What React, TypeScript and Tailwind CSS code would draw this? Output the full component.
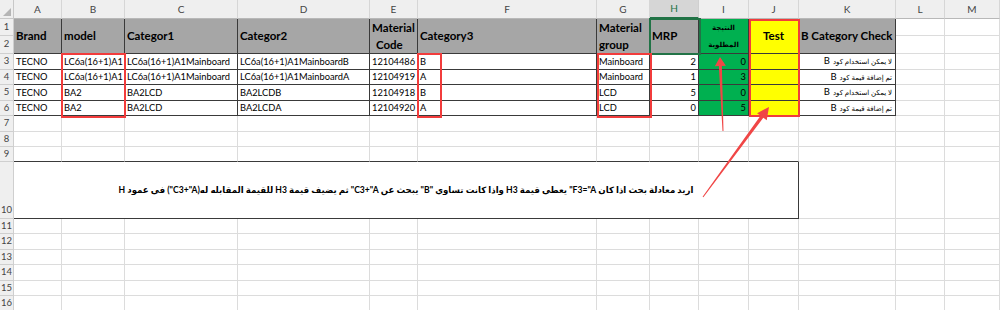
import clsx from "clsx";

const gridCell = "border-r border-b border-[#dcdcdc]";
const tableCell = "border-r border-b border-[#3a3a3a]";
const rowHead =
  "flex items-center justify-center border-r border-b border-[#cfcfcf] bg-[#efefef] text-[9.5px] text-[#444]";
const head =
  "row-span-2 flex items-center overflow-hidden whitespace-nowrap bg-[#a6a6a6] px-[2px] text-[11.5px] font-bold text-black";
const data = "flex items-center overflow-hidden whitespace-nowrap px-[2px] text-[9.3px] text-black";
const arabicCell = "flex items-center justify-start overflow-hidden whitespace-nowrap pr-[3px] text-[7px] text-black";

const rows = [
  { n: 3, a: "TECNO", b: "LC6a(16+1)A1", c: "LC6a(16+1)A1Mainboard", d: "LC6a(16+1)A1MainboardB", e: "12104486", f: "B", g: "Mainboard", h: "2", i: "0", k: "لا يمكن استخدام كود" },
  { n: 4, a: "TECNO", b: "LC6a(16+1)A1", c: "LC6a(16+1)A1Mainboard", d: "LC6a(16+1)A1MainboardA", e: "12104919", f: "A", g: "Mainboard", h: "1", i: "3", k: "تم إضافة قيمة كود" },
  { n: 5, a: "TECNO", b: "BA2", c: "BA2LCD", d: "BA2LCDB", e: "12104918", f: "B", g: "LCD", h: "5", i: "0", k: "لا يمكن استخدام كود" },
  { n: 6, a: "TECNO", b: "BA2", c: "BA2LCD", d: "BA2LCDA", e: "12104920", f: "A", g: "LCD", h: "0", i: "5", k: "تم إضافة قيمة كود" },
];

const letters = ["A", "B", "C", "D", "E", "F", "G", "H", "I", "J", "K", "L", "M"];

function arrow(x1: number, y1: number, x2: number, y2: number, hl: number, hw: number, tw: number, nw: number) {
  const dx = x2 - x1;
  const dy = y2 - y1;
  const len = Math.hypot(dx, dy);
  const ux = dx / len;
  const uy = dy / len;
  const px = -uy;
  const py = ux;
  const bx = x2 - ux * hl;
  const by = y2 - uy * hl;
  const p = (x: number, y: number, s: number) => `${x + px * s},${y + py * s}`;
  return [
    p(x1, y1, tw / 2),
    p(bx, by, nw / 2),
    p(bx, by, hw / 2),
    `${x2},${y2}`,
    p(bx, by, -hw / 2),
    p(bx, by, -nw / 2),
    p(x1, y1, -tw / 2),
  ].join(" ");
}

function EmptyRow({ n, darkBottom }: { n: number; darkBottom?: boolean }) {
  return (
    <>
      <div className={rowHead}>{n}</div>
      {letters.map((l, idx) => (
        <div
          key={l}
          className={clsx(
            "border-r border-b",
            darkBottom && idx < 10 ? "border-r-[#dcdcdc] border-b-[#3a3a3a]" : "border-[#dcdcdc]"
          )}
        />
      ))}
    </>
  );
}

export default function App() {
  return (
    <div className="relative h-[310px] w-[1000px] overflow-hidden bg-white font-['Lato','DejaVu_Sans',sans-serif]">
      <div className="grid grid-cols-[14px_48px_63px_113px_132px_48px_179px_53px_49px_50px_50px_97px_49px_55px] grid-rows-[19px_17px_18px_16px_15px_16px_15px_16px_15px_15px_57px_15px_16px_15px_16px_15px_16px]">
        {/* column headings */}
        <div className="relative border-r border-b border-[#c8c8c8] bg-[#efefef]">
          <div className="absolute right-[2px] bottom-[2px] h-0 w-0 border-l-[8px] border-t-[8px] border-l-transparent border-t-transparent border-r-0 border-b-[8px] border-b-[#b5b5b5]" />
        </div>
        {letters.map((l) => (
          <div
            key={l}
            className={clsx(
              "flex items-center justify-center border-r text-[10px]",
              l === "H"
                ? "border-b-2 border-r-[#cfcfcf] border-b-[#217346] bg-[#d6d6d6] text-[#217346]"
                : "border-b border-r-[#d6d6d6] border-b-[#b8b8b8] bg-[#efefef] text-[#444]"
            )}
          >
            {l}
          </div>
        ))}

        {/* rows 1-2 : table header */}
        <div className={clsx(rowHead, "bg-[#e1e1e1]")}>1</div>
        <div className={clsx(head, tableCell)}>Brand</div>
        <div className={clsx(head, tableCell)}>model</div>
        <div className={clsx(head, tableCell)}>Categor1</div>
        <div className={clsx(head, tableCell)}>Categor2</div>
        <div className={clsx(head, tableCell, "flex-col items-start justify-center leading-[17px]")}>
          <span>Material</span>
          <span className="pl-[4px]">Code</span>
        </div>
        <div className={clsx(head, tableCell)}>Category3</div>
        <div className={clsx(head, tableCell, "flex-col items-start justify-center leading-[17px]")}>
          <span>Material</span>
          <span>group</span>
        </div>
        <div className={clsx(head, tableCell)}>MRP</div>
        <div
          className={clsx(
            "row-span-2 flex flex-col items-center justify-center bg-[#00b050] text-[7px] leading-[17px] font-bold text-black",
            tableCell
          )}
        >
          <span>النتيجة</span>
          <span>المطلوبة</span>
        </div>
        <div className={clsx(head, tableCell, "justify-center bg-[#ffff00]")}>Test</div>
        <div className={clsx(head, tableCell, "bg-[#00b0f0]")}>B Category Check</div>
        <div className={gridCell} />
        <div className={gridCell} />
        <div className={clsx(rowHead, "bg-[#e1e1e1]")}>2</div>
        <div className={gridCell} />
        <div className={gridCell} />

        {/* rows 3-6 : data */}
        {rows.map((r) => (
          <div key={r.n} className="contents">
            <div className={rowHead}>{r.n}</div>
            <div className={clsx(data, tableCell)}>{r.a}</div>
            <div className={clsx(data, tableCell)}>{r.b}</div>
            <div className={clsx(data, tableCell)}>{r.c}</div>
            <div className={clsx(data, tableCell)}>{r.d}</div>
            <div className={clsx(data, tableCell)}>{r.e}</div>
            <div className={clsx(data, tableCell)}>{r.f}</div>
            <div className={clsx(data, tableCell)}>{r.g}</div>
            <div className={clsx(data, tableCell, "justify-end")}>{r.h}</div>
            <div className={clsx(data, tableCell, "justify-end bg-[#00b050]")}>{r.i}</div>
            <div className={clsx(tableCell, "bg-[#ffff00]")} />
            <div dir="rtl" className={clsx(arabicCell, tableCell)}>
              <span>{r.k}</span>
              <span className="mr-[3px] text-[9.5px]">B</span>
            </div>
            <div className={gridCell} />
            <div className={gridCell} />
          </div>
        ))}

        <EmptyRow n={7} />
        <EmptyRow n={8} />
        <EmptyRow n={9} darkBottom />

        {/* row 10 : merged note */}
        <div className={clsx(rowHead, "items-end pb-[1px]")}>10</div>
        <div
          dir="rtl"
          className="col-span-10 flex items-center justify-center border-r border-b border-[#3a3a3a] text-[8.6px] font-bold whitespace-nowrap text-black"
        >
          اريد معادلة بحث اذا كان F3="A" يعطي قيمة H3 واذا كانت تساوي "B" يبحث عن C3+"A" ثم يضيف قيمة H3 للقيمة المقابله له(C3+"A") في عمود H
        </div>
        <div className={gridCell} />
        <div className={gridCell} />
        <div className={gridCell} />

        {[11, 12, 13, 14, 15, 16].map((n) => (
          <EmptyRow key={n} n={n} />
        ))}
      </div>

      {/* selected cell H1 */}
      <div className="absolute top-[18px] left-[649px] h-[37px] w-[52px] border-2 border-[#217346]" />

      {/* red highlight boxes */}
      <div className="absolute top-[53px] left-[61px] h-[65px] w-[65px] border-2 border-[#f23c3c]" />
      <div className="absolute top-[53px] left-[417px] h-[65px] w-[25px] border-2 border-[#f23c3c]" />
      <div className="absolute top-[53px] left-[597px] h-[65px] w-[55px] border-2 border-[#f23c3c]" />
      <div className="absolute top-[19px] left-[749px] h-[98px] w-[51px] border-2 border-[#f23c3c]" />

      {/* arrows */}
      <svg className="pointer-events-none absolute inset-0" width="1000" height="310" viewBox="0 0 1000 310">
        <polygon points={arrow(723, 131, 720, 57, 9, 11, 1, 3)} fill="#f04646" />
        <polygon points={arrow(703, 197, 769, 107, 12, 12, 1, 3.5)} fill="#f04646" />
      </svg>
    </div>
  );
}
